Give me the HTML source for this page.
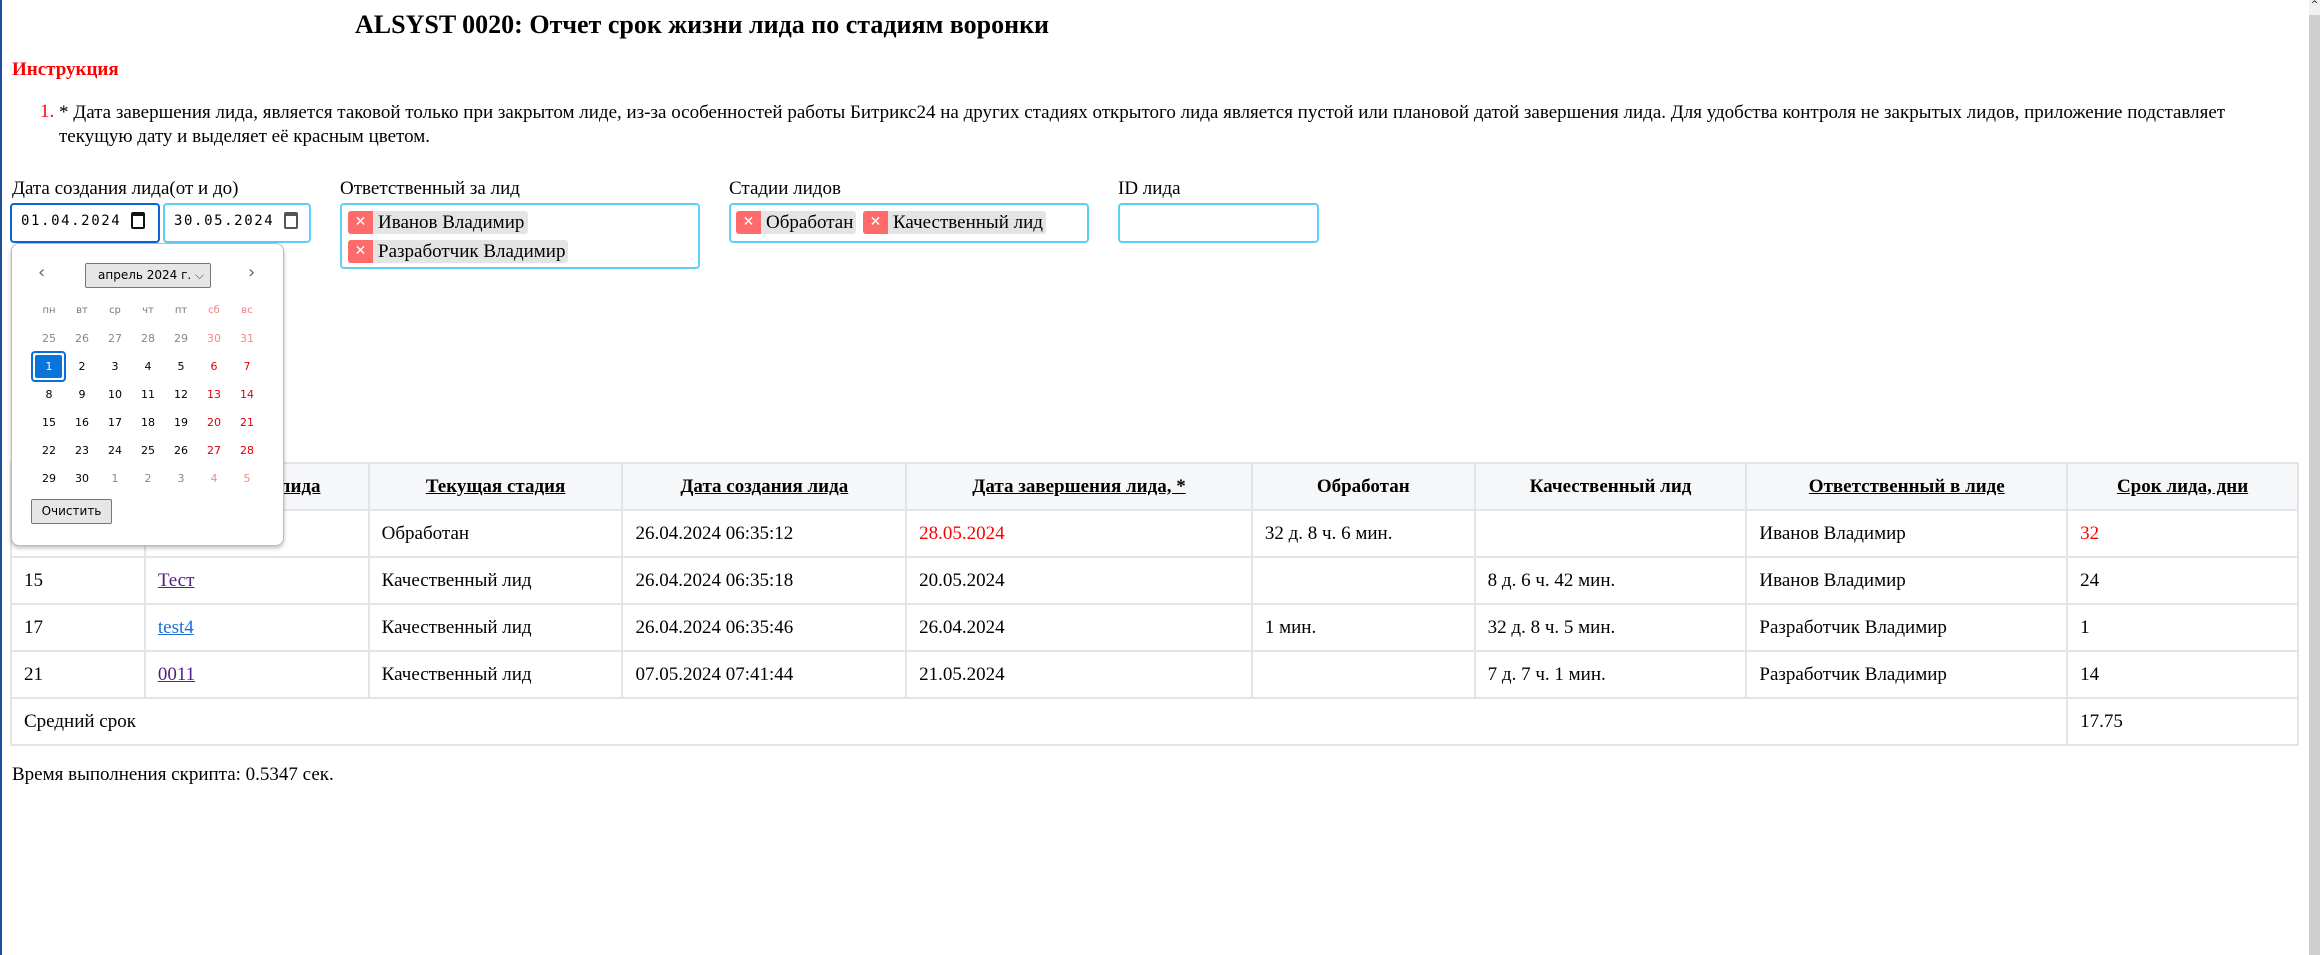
<!DOCTYPE html>
<html><head><meta charset="utf-8"><style>
*{box-sizing:border-box}
body{margin:0;width:2320px;height:955px;overflow:hidden;background:#fff;font-family:"Liberation Serif",serif;font-size:19px;color:#000;position:relative}
.a{position:absolute;white-space:nowrap}
.box{position:absolute;border:2px solid #5ccff5;border-radius:4px;background:#fff}
.tag{position:absolute;height:23px;background:#e4e4e4;border-radius:3px;font-size:19px;line-height:23px;padding-left:30px;padding-right:6px;white-space:nowrap}
.tag:before{content:"✕";position:absolute;left:0;top:0;width:25px;height:23px;background:#ff6b6b;color:#fff;border-radius:3px 0 0 3px;font-family:"DejaVu Sans",sans-serif;font-size:14px;text-align:center;line-height:23px;font-weight:bold}
.cal{position:absolute;left:11px;top:243px;width:273px;height:303px;border:1px solid #bbb;border-radius:8px;background:#fff;box-shadow:0 2px 4px rgba(0,0,0,.25);font-family:"DejaVu Sans","Liberation Sans",sans-serif;font-size:11px;z-index:5}
.cal .d{position:absolute;width:30px;text-align:center;transform:translateX(-50%)}
table{position:absolute;left:10px;top:462px;border-collapse:collapse;width:2289px}
td,th{border:2px solid #e2e4e7;height:47px;padding:0 12px;text-align:left;font-weight:normal;white-space:nowrap}
th{background:#f6f7f9;font-weight:bold;text-align:center}
.mono{font-family:"DejaVu Sans Mono",monospace;font-size:14px;letter-spacing:1.6px}
</style></head><body>
<div class="a" style="left:0;top:0;width:2px;height:955px;background:#1d4f9a"></div>
<div class="a" style="left:2309px;top:0;width:11px;height:955px;background:#cfcfcf"></div>
<div class="a" style="left:2309px;top:0;width:11px;height:15px;background:#f0f0f0;font-size:9px;text-align:center;font-family:'DejaVu Sans'">^</div>
<div class="a" style="left:355px;top:10px;font-size:26px;font-weight:bold">ALSYST 0020: Отчет срок жизни лида по стадиям воронки</div>
<div class="a" style="left:12px;top:59px;font-size:19px;font-weight:bold;color:#f00">Инструкция</div>
<div class="a" style="left:40px;top:101px;color:#f00">1.</div>
<div class="a" style="left:59px;top:101px;line-height:24px;width:2240px;white-space:normal">* Дата завершения лида, является таковой только при закрытом лиде, из-за особенностей работы Битрикс24 на других стадиях открытого лида является пустой или плановой датой завершения лида. Для удобства контроля не закрытых лидов, приложение подставляет текущую дату и выделяет её красным цветом.</div>
<div class="a" style="left:12px;top:178px">Дата создания лида(от и до)</div>
<div class="a" style="left:340px;top:178px">Ответственный за лид</div>
<div class="a" style="left:729px;top:178px">Стадии лидов</div>
<div class="a" style="left:1118px;top:178px">ID лида</div>
<div class="box" style="left:10px;top:203px;width:150px;height:40px;border-color:#0b63d6"></div>
<div class="a mono" style="left:21px;top:213px">01.04.2024</div>
<div class="a" style="left:131px;top:212px;width:14px;height:17px;border:2px solid #111;border-top-width:4px;border-radius:2px"></div>
<div class="box" style="left:163px;top:203px;width:148px;height:40px"></div>
<div class="a mono" style="left:174px;top:213px">30.05.2024</div>
<div class="a" style="left:284px;top:212px;width:14px;height:17px;border:2px solid #555;border-top-width:4px;border-radius:2px"></div>
<div class="box" style="left:340px;top:203px;width:360px;height:66px"></div>
<div class="tag" style="left:348px;top:211px;width:180px">Иванов Владимир</div>
<div class="tag" style="left:348px;top:240px;width:220px">Разработчик Владимир</div>
<div class="box" style="left:729px;top:203px;width:360px;height:40px"></div>
<div class="tag" style="left:736px;top:211px;width:120px">Обработан</div>
<div class="tag" style="left:863px;top:211px;width:183px">Качественный лид</div>
<div class="box" style="left:1118px;top:203px;width:201px;height:40px"></div>

<div class="cal">
<div class="a" style="left:26px;top:18px;font-size:18px;color:#666">‹</div>
<div class="a" style="left:236px;top:18px;font-size:18px;color:#666">›</div>
<div class="a" style="left:73px;top:19px;width:126px;height:25px;border:1px solid #777;border-radius:2px;background:#e6e6e6;font-size:12px;line-height:23px;padding-left:12px">апрель 2024 г. <span style="color:#555">⌵</span></div>
<div class="a" style="left:19px;top:107px;width:35px;height:31px;border:2px solid #0a6fd6;border-radius:4px;padding:2px"><div style="background:#0a74da;width:100%;height:100%;border-radius:2px"></div></div>
<div class="a" style="left:19px;top:255px;width:81px;height:25px;border:1px solid #777;border-radius:2px;background:#e6e6e6;font-size:12px;line-height:23px;text-align:center">Очистить</div>
<div id="g"></div>
</div>
<script>
var g=document.getElementById('g'),xs=[37,70,103,136,169,202,235];
var wd=['пн','вт','ср','чт','пт','сб','вс'];
var h='';
wd.forEach(function(w,i){h+='<div class="d" style="left:'+xs[i]+'px;top:61px;color:'+(i>4?'#f08080':'#777')+';font-size:10px">'+w+'</div>'});
var days=[25,26,27,28,29,30,31];for(var i=1;i<=30;i++)days.push(i);[1,2,3,4,5].forEach(function(v){days.push(v)});
days.forEach(function(v,k){var r=Math.floor(k/7),c=k%7;var other=(k<7||k>=37);var col=c>4?(other?'#f28b8b':'#e00000'):(other?'#888':'#000');if(k==7)col='#fff';
h+='<div class="d" style="left:'+xs[c]+'px;top:'+(88+r*28)+'px;color:'+col+'">'+v+'</div>'});
g.innerHTML=h;
</script>

<table>
<colgroup><col style="width:134px"><col style="width:224px"><col style="width:254px"><col style="width:284px"><col style="width:346px"><col style="width:223px"><col style="width:272px"><col style="width:321px"><col style="width:231px"></colgroup>
<tr><th><u>ID лида</u></th><th><u>Название лида</u></th><th><u>Текущая стадия</u></th><th><u>Дата создания лида</u></th><th><u>Дата завершения лида, *</u></th><th>Обработан</th><th>Качественный лид</th><th><u>Ответственный в лиде</u></th><th><u>Срок лида, дни</u></th></tr>
<tr><td>13</td><td><a style="color:#551a8b">Тест</a></td><td>Обработан</td><td>26.04.2024 06:35:12</td><td style="color:#f00">28.05.2024</td><td>32 д. 8 ч. 6 мин.</td><td></td><td>Иванов Владимир</td><td style="color:#f00">32</td></tr>
<tr><td>15</td><td><a style="color:#551a8b;text-decoration:underline">Тест</a></td><td>Качественный лид</td><td>26.04.2024 06:35:18</td><td>20.05.2024</td><td></td><td>8 д. 6 ч. 42 мин.</td><td>Иванов Владимир</td><td>24</td></tr>
<tr><td>17</td><td><a style="color:#1a6fd0;text-decoration:underline">test4</a></td><td>Качественный лид</td><td>26.04.2024 06:35:46</td><td>26.04.2024</td><td>1 мин.</td><td>32 д. 8 ч. 5 мин.</td><td>Разработчик Владимир</td><td>1</td></tr>
<tr><td>21</td><td><a style="color:#551a8b;text-decoration:underline">0011</a></td><td>Качественный лид</td><td>07.05.2024 07:41:44</td><td>21.05.2024</td><td></td><td>7 д. 7 ч. 1 мин.</td><td>Разработчик Владимир</td><td>14</td></tr>
<tr><td colspan="8">Средний срок</td><td>17.75</td></tr>
</table>
<div class="a" style="left:12px;top:764px">Время выполнения скрипта: 0.5347 сек.</div>
</body></html>
